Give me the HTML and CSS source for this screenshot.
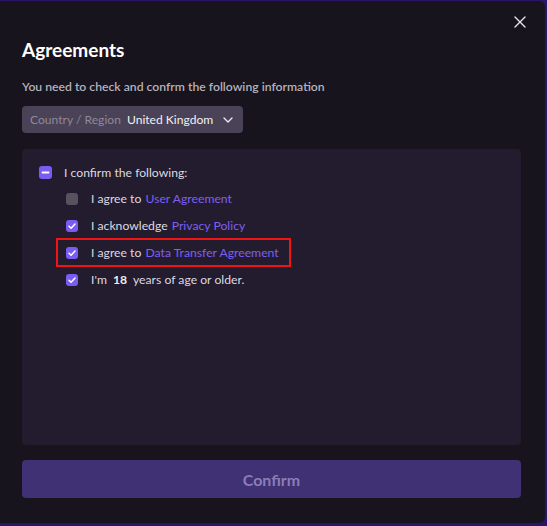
FILE: index.html
```html
<!DOCTYPE html>
<html>
<head>
<meta charset="utf-8">
<link rel="stylesheet" href="styles.css">
</head>
<body>
<div class="dialog">
  <button class="close" aria-label="Close">
    <svg width="12" height="12" viewBox="0 0 12 12"><path d="M1 1L11 11M11 1L1 11" stroke="#e8e6ee" stroke-width="1.4" stroke-linecap="round"/></svg>
  </button>
  <h1 class="title">Agreements</h1>
  <p class="subtitle">You need to check and confrm the following information</p>
  <div class="select">
    <span class="select-label">Country / Region</span>
    <span class="select-value">United Kingdom</span>
    <svg class="chev" width="10" height="6" viewBox="0 0 10 6"><path d="M1 1L5 5L9 1" fill="none" stroke="#e8e6ee" stroke-width="1.4" stroke-linecap="round" stroke-linejoin="round"/></svg>
  </div>
  <div class="panel">
    <div class="row parent">
      <span class="box checked"><svg width="13" height="13" viewBox="0 0 13 13"><path d="M3.5 6.5H9.5" stroke="#fff" stroke-width="1.8" stroke-linecap="round"/></svg></span>
      <span class="label">I confirm the following:</span>
    </div>
    <div class="children">
      <div class="row child">
        <span class="box off"></span>
        <span class="label">I agree to <a class="link">User Agreement</a></span>
      </div>
      <div class="row child">
        <span class="box checked"><svg width="12" height="12" viewBox="0 0 12 12"><path d="M3 6.2L5.1 8.2L9 4" fill="none" stroke="#fff" stroke-width="1.5" stroke-linecap="round" stroke-linejoin="round"/></svg></span>
        <span class="label">I acknowledge <a class="link">Privacy Policy</a></span>
      </div>
      <div class="row child highlighted">
        <span class="box checked"><svg width="12" height="12" viewBox="0 0 12 12"><path d="M3 6.2L5.1 8.2L9 4" fill="none" stroke="#fff" stroke-width="1.5" stroke-linecap="round" stroke-linejoin="round"/></svg></span>
        <span class="label">I agree to <a class="link">Data Transfer Agreement</a></span>
      </div>
      <div class="row child">
        <span class="box checked"><svg width="12" height="12" viewBox="0 0 12 12"><path d="M3 6.2L5.1 8.2L9 4" fill="none" stroke="#fff" stroke-width="1.5" stroke-linecap="round" stroke-linejoin="round"/></svg></span>
        <span class="label">I'm <b class="age">18</b> years of age or older.</span>
      </div>
    </div>
  </div>
  <button class="confirm">Confirm</button>
</div>
</body>
</html>
```
FILE: styles.css
```css
* { box-sizing: border-box; }
html, body { margin: 0; padding: 0; }
body {
  width: 547px;
  height: 526px;
  background: #2a1468;
  font-family: Lato, "Noto Sans", sans-serif;
  overflow: hidden;
}
.dialog {
  position: relative;
  margin-top: 1px;
  width: 545px;
  height: 522px;
  background: #17141d;
  border-radius: 0 6px 6px 0;
  padding: 37px 22px 0 22px;
  white-space: nowrap;
}
.close {
  position: absolute;
  top: 15px;
  right: 19px;
  width: 12px;
  height: 12px;
  padding: 0;
  border: 0;
  background: none;
  display: flex;
}
.title {
  margin: 0;
  font-size: 19px;
  line-height: 24px;
  font-weight: 700;
  color: #ffffff;
}
.subtitle {
  margin: 17px 0 0 0;
  font-size: 12.2px;
  line-height: 16px;
  font-weight: 600;
  color: #b6b2bd;
}
.select {
  margin-top: 11px;
  width: 221px;
  height: 27px;
  background: #4a4256;
  border-radius: 4px;
  display: flex;
  align-items: center;
  padding: 0 8px;
  font-size: 12.1px;
}
.select-label { color: #8f889b; }
.select-value { color: #f2f0f5; margin-left: 6px; }
.chev { margin-left: 10px; flex: none; }
.panel {
  margin-top: 16px;
  width: 499px;
  height: 296px;
  background: #231c2e;
  border-radius: 4px;
  padding: 16px 17px;
}
.row {
  display: flex;
  align-items: center;
  font-size: 12.2px;
  color: #dcd9e2;
}
.parent { height: 14px; }
.parent .label { margin-left: 12px; }
.children {
  margin-top: 6px;
  padding-left: 27px;
}
.child { height: 27px; }
.child .label { margin-left: 13px; }
.box {
  width: 13px;
  height: 13px;
  border-radius: 3px;
  display: flex;
  align-items: center;
  justify-content: center;
  flex: none;
}
.child .box { width: 12px; height: 12px; }
.box.checked { background: #7b5cf2; }
.box.off { background: #57525e; }
.link { color: #7d5ff2; margin-left: 1px; }
.age { font-weight: 700; margin: 0 3px; color: #eeeaf2; }
.highlighted {
  outline: 2px solid #f01515;
  outline-offset: -1px;
  margin-left: -9px;
  padding-left: 9px;
  width: 233px;
}
.confirm {
  display: block;
  margin-top: 15px;
  width: 499px;
  height: 38px;
  border: 0;
  border-radius: 4px;
  background: #3f3173;
  color: #8a7db7;
  font-family: Lato, "Noto Sans", sans-serif;
  font-size: 16px;
  font-weight: 700;
}
```
